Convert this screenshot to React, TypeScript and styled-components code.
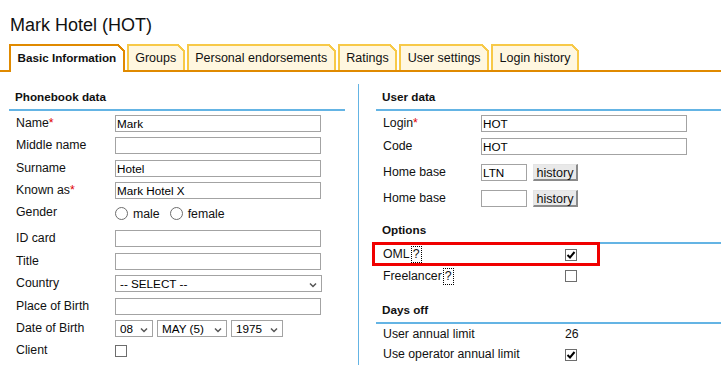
import React from 'react'
import styled, { createGlobalStyle } from 'styled-components'

const ORANGE = '#e08a00'
const GOLD = '#f7c948'
const CREAM = '#fff7e0'
const BLUE = '#64b4e4'

const GlobalStyle = createGlobalStyle`
  html, body { margin: 0; padding: 0; background: #fff; }
  body {
    font-family: "Liberation Sans", Arial, sans-serif;
    color: #111;
  }
`

const tabs = ['Basic Information', 'Groups', 'Personal endorsements', 'Ratings', 'User settings', 'Login history']

const Chevron = () => (
  <svg width="8" height="6" viewBox="0 0 8 6">
    <path d="M1 1.5 L4 4.5 L7 1.5" stroke="#555" strokeWidth="1.5" fill="none" />
  </svg>
)

const Tick = () => (
  <svg width="10" height="10" viewBox="0 0 10 10">
    <path d="M1.5 5 L4 7.5 L8.5 2" stroke="#000" strokeWidth="2" fill="none" />
  </svg>
)

const Check = ({ checked }: { checked?: boolean }) => (
  <CheckBox>{checked && <Tick />}</CheckBox>
)

const Select = ({ value, width }: { value: string; width: number }) => (
  <SelectBox $width={width}>
    <span>{value}</span>
    <Chevron />
  </SelectBox>
)

interface FieldProps {
  label: string
  required?: boolean
  extra?: number
  children: React.ReactNode
}

const Field = ({ label, required, extra, children }: FieldProps) => (
  <Row $extra={extra}>
    <Label>{label}{required && <Req>*</Req>}</Label>
    {children}
  </Row>
)

export default function App() {
  return <Page>
    <GlobalStyle />
    <Title>Mark Hotel (HOT)</Title>
    <TabBar>
      {tabs.map((t, i) => <Tab key={t} $active={i === 0}>{t}</Tab>)}
    </TabBar>

    <Columns>
      <LeftCol>
        <SectionHead>Phonebook data</SectionHead>
        <FieldList $pt={4} $gap={5.4}>
          <Field label="Name" required><TextBox $width={206} value="Mark" readOnly /></Field>
          <Field label="Middle name"><TextBox $width={206} value="" readOnly /></Field>
          <Field label="Surname"><TextBox $width={206} value="Hotel" readOnly /></Field>
          <Field label="Known as" required><TextBox $width={206} value="Mark Hotel X" readOnly /></Field>
          <GenderRow>
            <Label $top>Gender</Label>
            <RadioGroup>
              <Radio /><RadioText>male</RadioText>
              <Radio /><RadioText>female</RadioText>
            </RadioGroup>
          </GenderRow>
          <Field label="ID card"><TextBox $width={206} value="" readOnly /></Field>
          <Field label="Title"><TextBox $width={206} value="" readOnly /></Field>
          <Field label="Country"><Select value="-- SELECT --" width={207} /></Field>
          <Field label="Place of Birth"><TextBox $width={206} value="" readOnly /></Field>
          <Field label="Date of Birth">
            <SelectGroup>
              <Select value="08" width={38} />
              <Select value="MAY (5)" width={70} />
              <Select value="1975" width={52} />
            </SelectGroup>
          </Field>
          <Field label="Client"><Check /></Field>
        </FieldList>
      </LeftCol>

      <RightCol>
        <SectionHead>User data</SectionHead>
        <FieldList $pt={4} $label={98}>
          <Field label="Login" required><TextBox $width={206} value="HOT" readOnly /></Field>
          <Field label="Code"><TextBox $width={206} value="HOT" readOnly /></Field>
          <Field label="Home base" extra={3.5}>
            <TextBox $width={46} value="LTN" readOnly />
            <HistoryButton>history</HistoryButton>
          </Field>
          <Field label="Home base" extra={4}>
            <TextBox $width={46} value="" readOnly />
            <HistoryButton>history</HistoryButton>
          </Field>
        </FieldList>

        <SectionHead $mt={10}>Options</SectionHead>
        <FieldList $pt={2} $gap={4.5} $label={182}>
          <Row>
            <Highlight />
            <Label>OML<Help>?</Help></Label>
            <Check checked />
          </Row>
          <Row>
            <Label>Freelancer<Help>?</Help></Label>
            <Check />
          </Row>
        </FieldList>

        <SectionHead $mt={11.5}>Days off</SectionHead>
        <FieldList $pt={2} $gap={3.8} $label={182}>
          <Field label="User annual limit"><Value>26</Value></Field>
          <Field label="Use operator annual limit"><Check checked /></Field>
        </FieldList>
      </RightCol>
    </Columns>
  </Page>
}

const Page = styled.div`
  width: 721px;
  height: 365px;
  overflow: hidden;
`

const Title = styled.h1`
  margin: 14px 0 0 10px;
  font-size: 18px;
  font-weight: normal;
  line-height: 22px;
  color: #111;
`

const TabBar = styled.div`
  display: flex;
  align-items: flex-start;
  gap: 2px;
  height: 26px;
  margin-top: 8px;
  padding-left: 9px;
  border-bottom: 2px solid ${ORANGE};
`

const Tab = styled.div<{ $active?: boolean }>`
  position: relative;
  box-sizing: border-box;
  display: flex;
  align-items: center;
  height: ${p => p.$active ? 28 : 26}px;
  padding: 0 6.5px ${p => p.$active ? 3 : 1}px;
  border: 2px solid ${p => p.$active ? ORANGE : GOLD};
  border-bottom: none;
  background: ${p => p.$active ? '#fff' : CREAM};
  font-size: ${p => p.$active ? 11.7 : 12.5}px;
  font-weight: ${p => p.$active ? 'bold' : 'normal'};
  white-space: nowrap;
  z-index: 1;

  &::after {
    content: '';
    position: absolute;
    top: -2px;
    right: -2px;
    width: 8px;
    height: 8px;
    background: linear-gradient(45deg,
      ${p => p.$active ? '#fff' : CREAM} calc(50% - 1px),
      ${p => p.$active ? ORANGE : GOLD} calc(50% - 1px),
      ${p => p.$active ? ORANGE : GOLD} calc(50% + 1px),
      #fff calc(50% + 1px));
  }
`

const Columns = styled.div`
  display: grid;
  grid-template-columns: 359px 1fr;
  margin-top: 12px;
  height: 281px;
`

const LeftCol = styled.div`
  box-sizing: border-box;
  padding: 0 13px 0 9px;
  border-right: 1px solid ${BLUE};
`

const RightCol = styled.div`
  padding-left: 17px;
`

const SectionHead = styled.div<{ $mt?: number }>`
  margin-top: ${p => p.$mt ?? 0}px;
  padding: 6px 6px 5px;
  font-size: 11.7px;
  font-weight: bold;
  line-height: 14px;
  border-bottom: 2px solid ${BLUE};
`

const FieldList = styled.div<{ $pt: number; $gap?: number; $label?: number }>`
  --label: ${p => p.$label ?? 99}px;
  display: flex;
  flex-direction: column;
  gap: ${p => p.$gap ?? 5.5}px;
  padding: ${p => p.$pt}px 0 0 7px;
`

const Row = styled.div<{ $extra?: number }>`
  position: relative;
  display: flex;
  align-items: center;
  min-height: 17px;
  margin-top: ${p => p.$extra ?? 0}px;
`

const GenderRow = styled(Row)`
  align-items: flex-start;
  height: 20.5px;
`

const Label = styled.div<{ $top?: boolean }>`
  width: var(--label);
  flex: none;
  font-size: 12.3px;
  line-height: 17px;
  white-space: nowrap;
  ${p => p.$top ? 'margin-top: -1px;' : ''}
`

const Req = styled.span`
  color: #e00000;
`

const Help = styled.span`
  display: inline-block;
  margin-left: 1px;
  padding: 0 1px;
  border: 1px dotted #000;
  line-height: 15px;
  vertical-align: middle;
`

const TextBox = styled.input<{ $width: number }>`
  box-sizing: border-box;
  width: ${p => p.$width}px;
  height: 17px;
  margin: 0;
  padding: 0 1px;
  border: 1px solid #a3a3a3;
  border-radius: 0;
  font-family: "Liberation Sans", Arial, sans-serif;
  font-size: 11.7px;
  color: #000;
  outline: none;
`

const SelectBox = styled.div<{ $width: number }>`
  box-sizing: border-box;
  display: flex;
  align-items: center;
  justify-content: space-between;
  width: ${p => p.$width}px;
  height: 17px;
  padding: 0 4px 0 4px;
  border: 1px solid #a3a3a3;
  font-size: 11.7px;
  color: #000;
  svg { margin-top: 2px; }
`

const SelectGroup = styled.div`
  display: flex;
  gap: 4px;
`

const RadioGroup = styled.div`
  display: flex;
  align-items: center;
  padding-top: 2px;
  font-size: 12.3px;
`

const Radio = styled.span`
  box-sizing: border-box;
  width: 13px;
  height: 13px;
  border: 1px solid #6d6d6d;
  border-radius: 50%;
  background: #fff;
`

const RadioText = styled.span`
  margin: 0 10px 0 5px;
`

const CheckBox = styled.span`
  box-sizing: border-box;
  display: flex;
  align-items: center;
  justify-content: center;
  width: 12px;
  height: 12px;
  border: 1px solid #6d6d6d;
  background: #fff;
`

const HistoryButton = styled.button`
  box-sizing: border-box;
  width: 45px;
  height: 17px;
  margin: 0 0 0 6px;
  padding: 2px 0 0;
  border-style: solid;
  border-width: 1px 2px 2px 1px;
  border-color: #e4e4e4 #8a8a8a #8a8a8a #e4e4e4;
  background: #e9e9e9;
  font-family: "Liberation Sans", Arial, sans-serif;
  font-size: 12.6px;
  line-height: 13px;
  color: #111;
`

const Value = styled.span`
  font-size: 12.3px;
`

const Highlight = styled.div`
  position: absolute;
  box-sizing: border-box;
  top: -4px;
  left: -11px;
  width: 228px;
  height: 24px;
  border: 3px solid #f00000;
  pointer-events: none;
`
